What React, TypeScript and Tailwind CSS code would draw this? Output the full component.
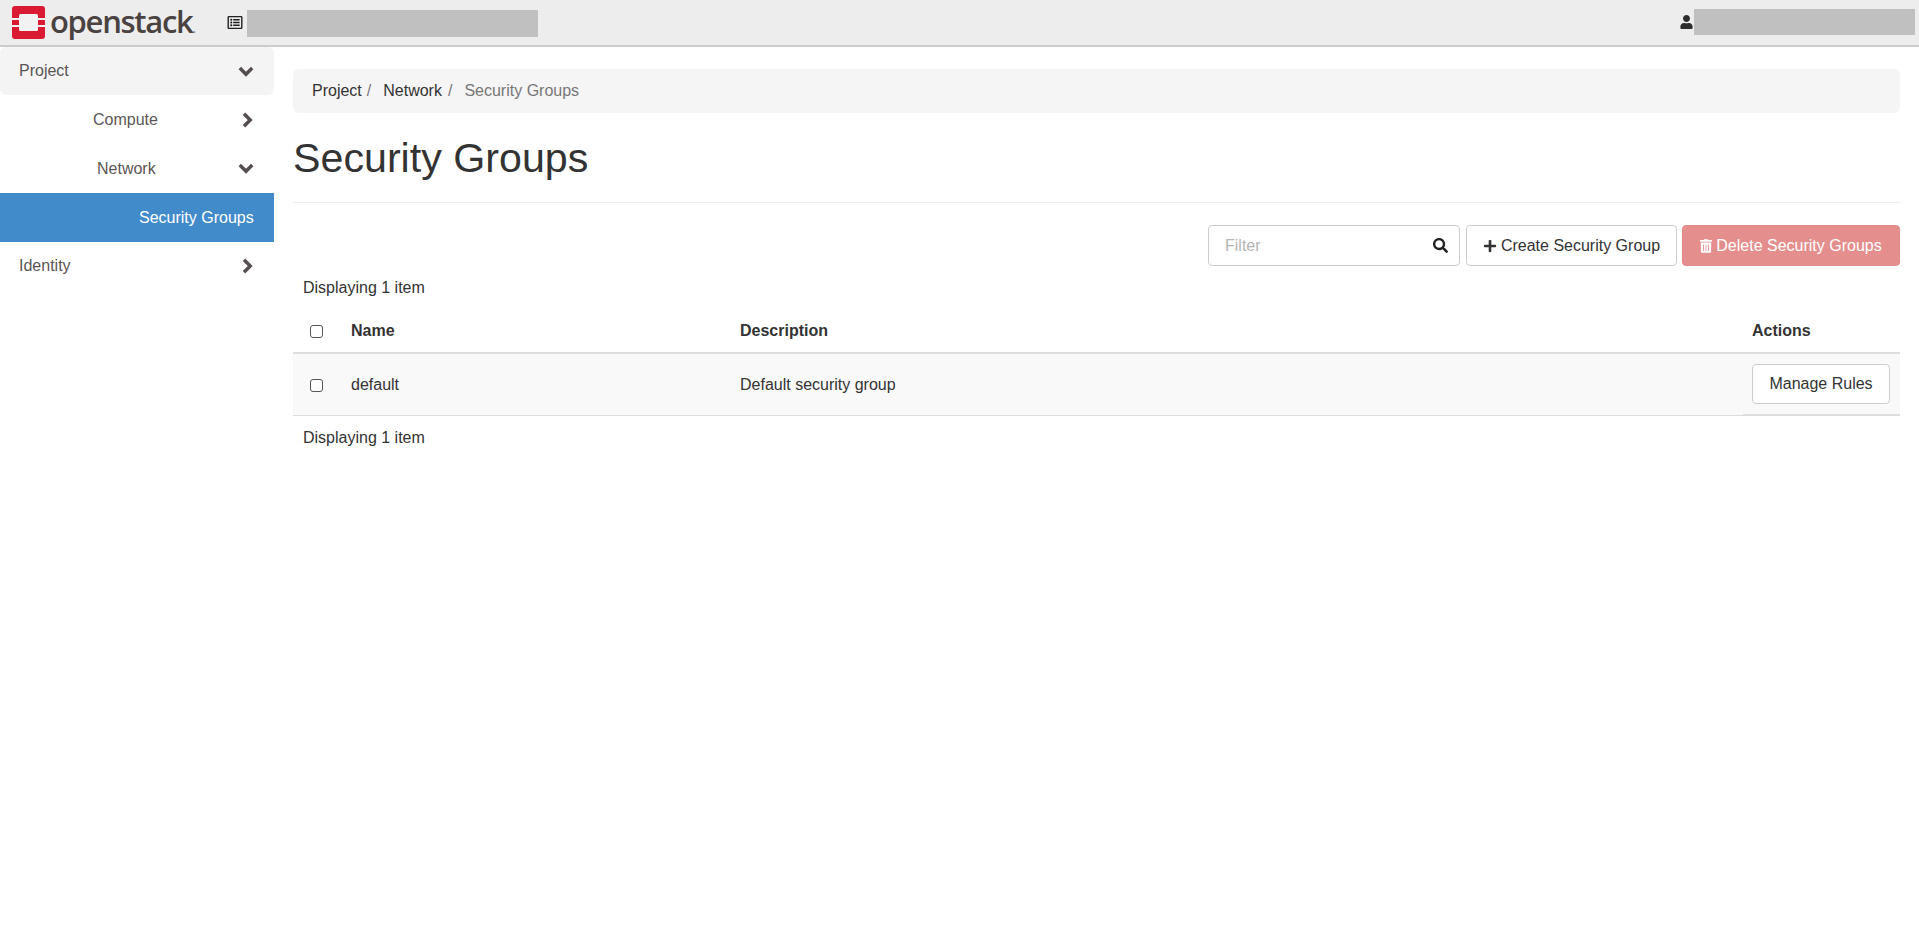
import React from "react";
import { FaSearch, FaPlus, FaTrashAlt, FaUser, FaRegListAlt } from "react-icons/fa";

function Logo() {
  return (
    <svg width="33" height="33" viewBox="0 0 33 33" className="shrink-0">
      <rect x="0" y="0" width="33" height="33" rx="3" fill="#da1a32" />
      <rect x="7" y="8" width="19" height="17" rx="1.500" fill="#f2f2f2" />
      <rect x="0" y="12" width="7" height="2" fill="#f2f2f2" />
      <rect x="26" y="12" width="7" height="2" fill="#f2f2f2" />
      <rect x="0" y="19" width="7" height="2" fill="#f2f2f2" />
      <rect x="26" y="19" width="7" height="2" fill="#f2f2f2" />
    </svg>
  );
}

function ChevronDown() {
  return (
    <svg width="16" height="11" viewBox="0 0 16 11" className="shrink-0">
      <polyline points="1.800,2 8,8.200 14.200,2" fill="none" stroke="#544f4e" strokeWidth="3.500" />
    </svg>
  );
}

function ChevronRight() {
  return (
    <svg width="11" height="16" viewBox="0 0 11 16" className="shrink-0">
      <polyline points="2,1.800 8.200,8 2,14.200" fill="none" stroke="#544f4e" strokeWidth="3.500" />
    </svg>
  );
}

function NavRow({ label, pad, icon, className = "" }: { label: string; pad: string; icon?: React.ReactNode; className?: string }) {
  return (
    <div className={`flex items-center justify-between ${pad} ${className}`}>
      <span>{label}</span>
      {icon}
    </div>
  );
}

export default function App() {
  return (
    <div className="min-h-[945px] bg-white text-[16px] text-[#333333] font-['Liberation_Sans',Arial,sans-serif]">
      <header className="flex items-start h-[47px] bg-[#ededed] border-b-2 border-[#cccccc]">
        <div className="flex items-center ml-[12px] gap-[5px] mt-[6px]">
          <Logo />
          <span className="text-[#4a4240] text-[31px] tracking-[-1.3px] leading-none font-semibold font-['Open_Sans',sans-serif] -mt-[3px]">openstack<span className="text-[12px] text-[#777]">.</span></span>
        </div>
        <FaRegListAlt className="ml-[32px] mt-[15px] text-[#222] w-[16px] h-[15px] shrink-0" />
        <div className="ml-[4px] mt-[10px] w-[291px] h-[27px] bg-[#c0c0c0]" />
        <div className="ml-auto flex items-start mr-[4px] mt-[9px]">
          <FaUser className="text-[#2d2d2d] w-[13px] h-[14px] mt-[6px]" />
          <div className="ml-[1px] w-[221px] h-[26px] bg-[#c0c0c0]" />
        </div>
      </header>
      <div className="flex items-start">
        <aside className="w-[274px] shrink-0 text-[#5b5654]">
          <NavRow label="Project" pad="h-[48px] pl-[19px] pr-[20px]" className="bg-[#f4f4f4] rounded-[6px]" icon={<ChevronDown />} />
          <NavRow label="Compute" pad="h-[49px] pl-[93px] pr-[21px]" icon={<ChevronRight />} />
          <NavRow label="Network" pad="h-[49px] pl-[97px] pr-[20px]" icon={<ChevronDown />} />
          <NavRow label="Security Groups" pad="h-[49px] pl-[139px]" className="bg-[#428bca] text-white" />
          <NavRow label="Identity" pad="h-[47px] pl-[19px] pr-[21px]" icon={<ChevronRight />} />
        </aside>
        <main className="flex-1 ml-[19px] mr-[19px] pt-[22px]">
          <nav className="flex items-center h-[44px] bg-[#f5f5f5] rounded-[6px] pl-[19px]">
            <span>Project</span>
            <span className="text-[#777] ml-[5px]">/</span>
            <span className="ml-[12px]">Network</span>
            <span className="text-[#777] ml-[6px]">/</span>
            <span className="ml-[12px] text-[#777]">Security Groups</span>
          </nav>
          <h1 className="text-[41.2px] leading-[46px] text-[#333] mt-[20px] pt-[2px] border-b border-[#eeeeee] h-[70px] font-normal">Security Groups</h1>
          <div className="flex justify-end mt-[22px] h-[41px]">
            <div className="w-[252px] h-[41px] border border-[#cccccc] rounded-[4px] flex items-center px-[16px] text-[#b4b4b4]">
              <span>Filter</span>
              <FaSearch className="ml-auto -mr-[5px] text-[#222] w-[15px] h-[15px]" />
            </div>
            <div className="ml-[6px] flex items-center h-[41px] w-[211px] justify-center border border-[#cccccc] rounded-[4px] gap-[4px]">
              <FaPlus className="w-[14px] h-[14px] text-[#333]" />
              <span>Create Security Group</span>
            </div>
            <div className="ml-[5px] flex items-center h-[41px] w-[218px] justify-center bg-[#e58e8e] border border-[#e28a8a] rounded-[4px] text-white gap-[4px]">
              <FaTrashAlt className="w-[12px] h-[14px]" />
              <span>Delete Security Groups</span>
            </div>
          </div>
          <div className="h-[20px] leading-[20px] pl-[10px] mt-[12px]">Displaying 1 item</div>
          <div className="grid grid-cols-[58px_389px_1012px_1fr] h-[44px] mt-[12px] items-center border-b-2 border-[#dddddd] font-bold text-[#333]">
            <div className="pl-[17px]"><span className="block w-[13px] h-[13px] border border-[#555] rounded-[3px]" /></div>
            <div>Name</div>
            <div>Description</div>
            <div>Actions</div>
          </div>
          <div className="grid grid-cols-[58px_389px_1012px_1fr] h-[62px] items-center bg-[#f9f9f9] border-b border-[#dddddd]">
            <div className="pl-[17px]"><span className="block w-[13px] h-[13px] border border-[#555] rounded-[3px] bg-white" /></div>
            <div>default</div>
            <div>Default security group</div>
            <div className="h-[62px] flex items-center border-b-[2px] border-[#dddddd] -ml-[9px] pl-[9px]">
              <div className="flex items-center justify-center w-[138px] h-[40px] bg-white border border-[#cccccc] rounded-[4px]">Manage Rules</div>
            </div>
          </div>
          <div className="h-[20px] leading-[20px] pl-[10px] mt-[12px]">Displaying 1 item</div>
        </main>
      </div>
    </div>
  );
}
